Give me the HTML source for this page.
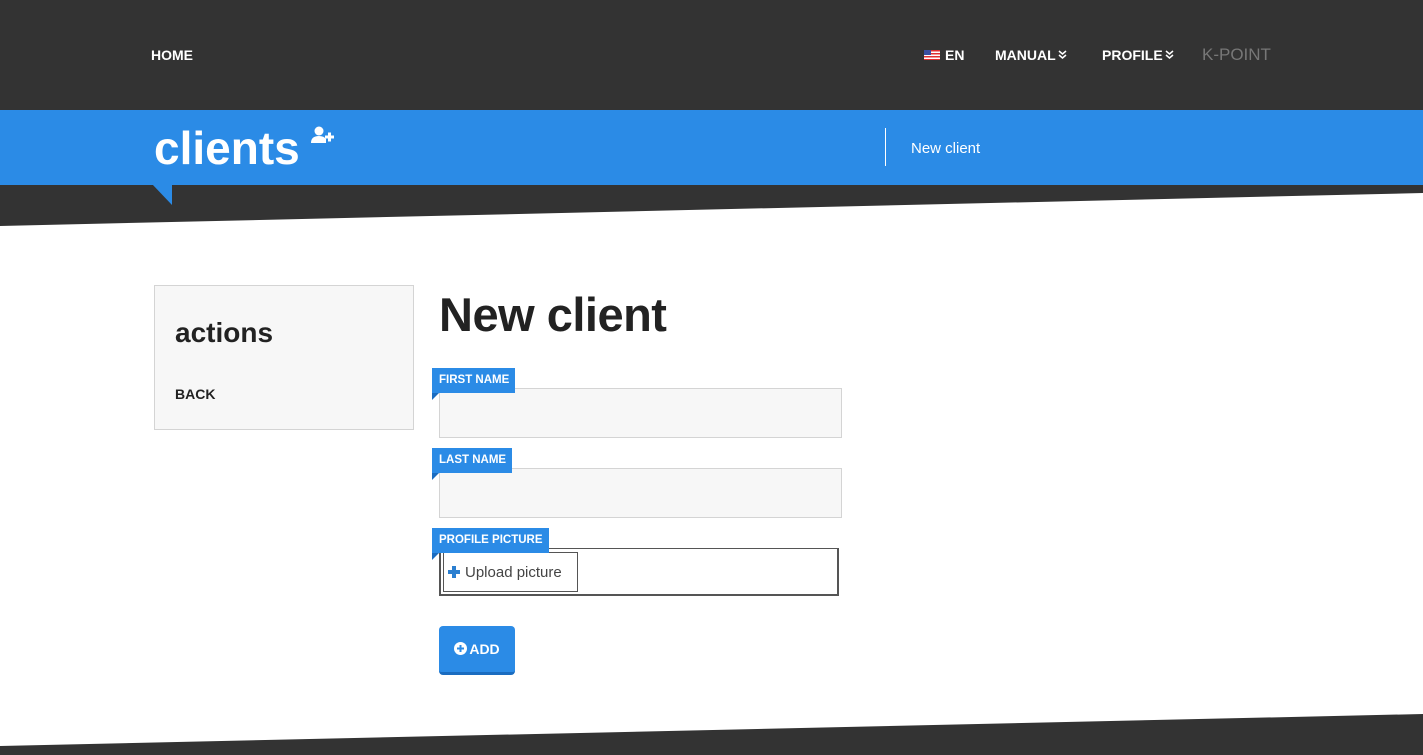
<!DOCTYPE html>
<html><head><style>
*{margin:0;padding:0;box-sizing:border-box}
body{width:1423px;height:755px;overflow:hidden;background:#fff;font-family:"Liberation Sans",sans-serif;position:relative}
.top{position:absolute;left:0;top:0;width:1423px;height:110px;background:#333}
.nav{position:absolute;top:47px;color:#fff;font-weight:bold;font-size:14px}
.blue{position:absolute;left:0;top:110px;width:1423px;height:75px;background:#2b8be6}
svg.bg{position:absolute;left:0;top:0}
.lbl{position:absolute;left:432px;background:#2b8be6;color:#fff;font-weight:bold;font-size:11.5px;height:25px;line-height:25px;padding:0 6px 0 7px}
.lbl:after{content:"";position:absolute;left:0;bottom:-7px;border-top:7px solid #1a6cc0;border-right:7px solid transparent}
.inp{position:absolute;left:439px;width:403px;height:50px;background:#f7f7f7;border:1px solid #d4d4d4}
.chev{display:inline-block;vertical-align:1px;margin-left:2px}
</style></head><body>
<div class="top"></div>
<svg class="bg" width="1423" height="755">
<polygon points="0,185 1423,185 1423,193 0,226" fill="#333"/>
<polygon points="0,746 1423,714 1423,755 0,755" fill="#333"/>
<polygon points="152,184 172,184 172,205" fill="#2b8be6"/>
</svg>
<div class="blue"></div>
<div class="nav" style="left:151px">HOME</div>
<div class="nav" style="left:924px"><span style="display:inline-block;width:16px;height:10px;background:repeating-linear-gradient(#e03030 0 1.5px,#fff 1.5px 3px);position:relative;margin-right:5px"><span style="position:absolute;left:0;top:0;width:7px;height:5px;background:#3a4fa0"></span></span>EN</div>
<div class="nav" style="left:995px">MANUAL<svg class="chev" width="9" height="9" viewBox="0 0 9 9"><path d="M1 1l3.5 3 3.5-3M1 5l3.5 3 3.5-3" stroke="#fff" stroke-width="1.5" fill="none"/></svg></div>
<div class="nav" style="left:1102px">PROFILE<svg class="chev" width="9" height="9" viewBox="0 0 9 9"><path d="M1 1l3.5 3 3.5-3M1 5l3.5 3 3.5-3" stroke="#fff" stroke-width="1.5" fill="none"/></svg></div>
<div class="nav" style="left:1202px;color:#777;font-weight:normal;font-size:17px;top:45px">K-POINT</div>
<div style="position:absolute;left:154px;top:121px;color:#fff;font-size:46px;font-weight:bold;letter-spacing:0px">clients</div>
<svg style="position:absolute;left:311px;top:126px" width="24" height="18" viewBox="0 0 24 18"><circle cx="8" cy="5" r="4.5" fill="#fff"/><path d="M0 17 Q0 10 8 10 Q13 10 15 13 L15 17Z" fill="#fff"/><path d="M14 11h9M18.5 6.5v9" stroke="#fff" stroke-width="3"/></svg>
<div style="position:absolute;left:885px;top:128px;width:1px;height:38px;background:#fff"></div>
<div style="position:absolute;left:911px;top:140px;color:#fff;font-size:15px">New client</div>
<div style="position:absolute;left:154px;top:285px;width:260px;height:145px;background:#f7f7f7;border:1px solid #d4d4d4"></div>
<div style="position:absolute;left:175px;top:317px;font-size:28px;font-weight:bold;color:#222">actions</div>
<div style="position:absolute;left:175px;top:386px;font-size:14px;font-weight:bold;color:#222">BACK</div>
<div style="position:absolute;left:439px;top:287px;font-size:47px;font-weight:bold;color:#222;letter-spacing:-0.5px">New client</div>
<div class="inp" style="top:388px"></div>
<div class="lbl" style="top:368px">FIRST NAME</div>
<div class="inp" style="top:468px"></div>
<div class="lbl" style="top:448px">LAST NAME</div>
<div style="position:absolute;left:439px;top:548px;width:400px;height:48px;border:2px solid #555;border-top-width:1px"></div>
<div style="position:absolute;left:443px;top:552px;width:135px;height:40px;border:1px solid #555;font-size:15px;color:#444;line-height:40px;padding-left:21px">Upload picture</div>
<svg style="position:absolute;left:448px;top:566px" width="12" height="12"><path d="M6 0v12M0 6h12" stroke="#2b7fd0" stroke-width="4"/></svg>
<div class="lbl" style="top:528px">PROFILE PICTURE</div>
<div style="position:absolute;left:439px;top:626px;width:76px;height:49px;background:#2b8be6;border-bottom:3px solid #1a6cc0;border-radius:4px;color:#fff;font-weight:bold;font-size:14px;line-height:46px;text-align:center"><svg width="13" height="13" viewBox="0 0 13 13" style="vertical-align:-1px;margin-right:2px"><circle cx="6.5" cy="6.5" r="6.5" fill="#fff"/><path d="M6.5 3v7M3 6.5h7" stroke="#2b8be6" stroke-width="2"/></svg>ADD</div>
</body></html>
